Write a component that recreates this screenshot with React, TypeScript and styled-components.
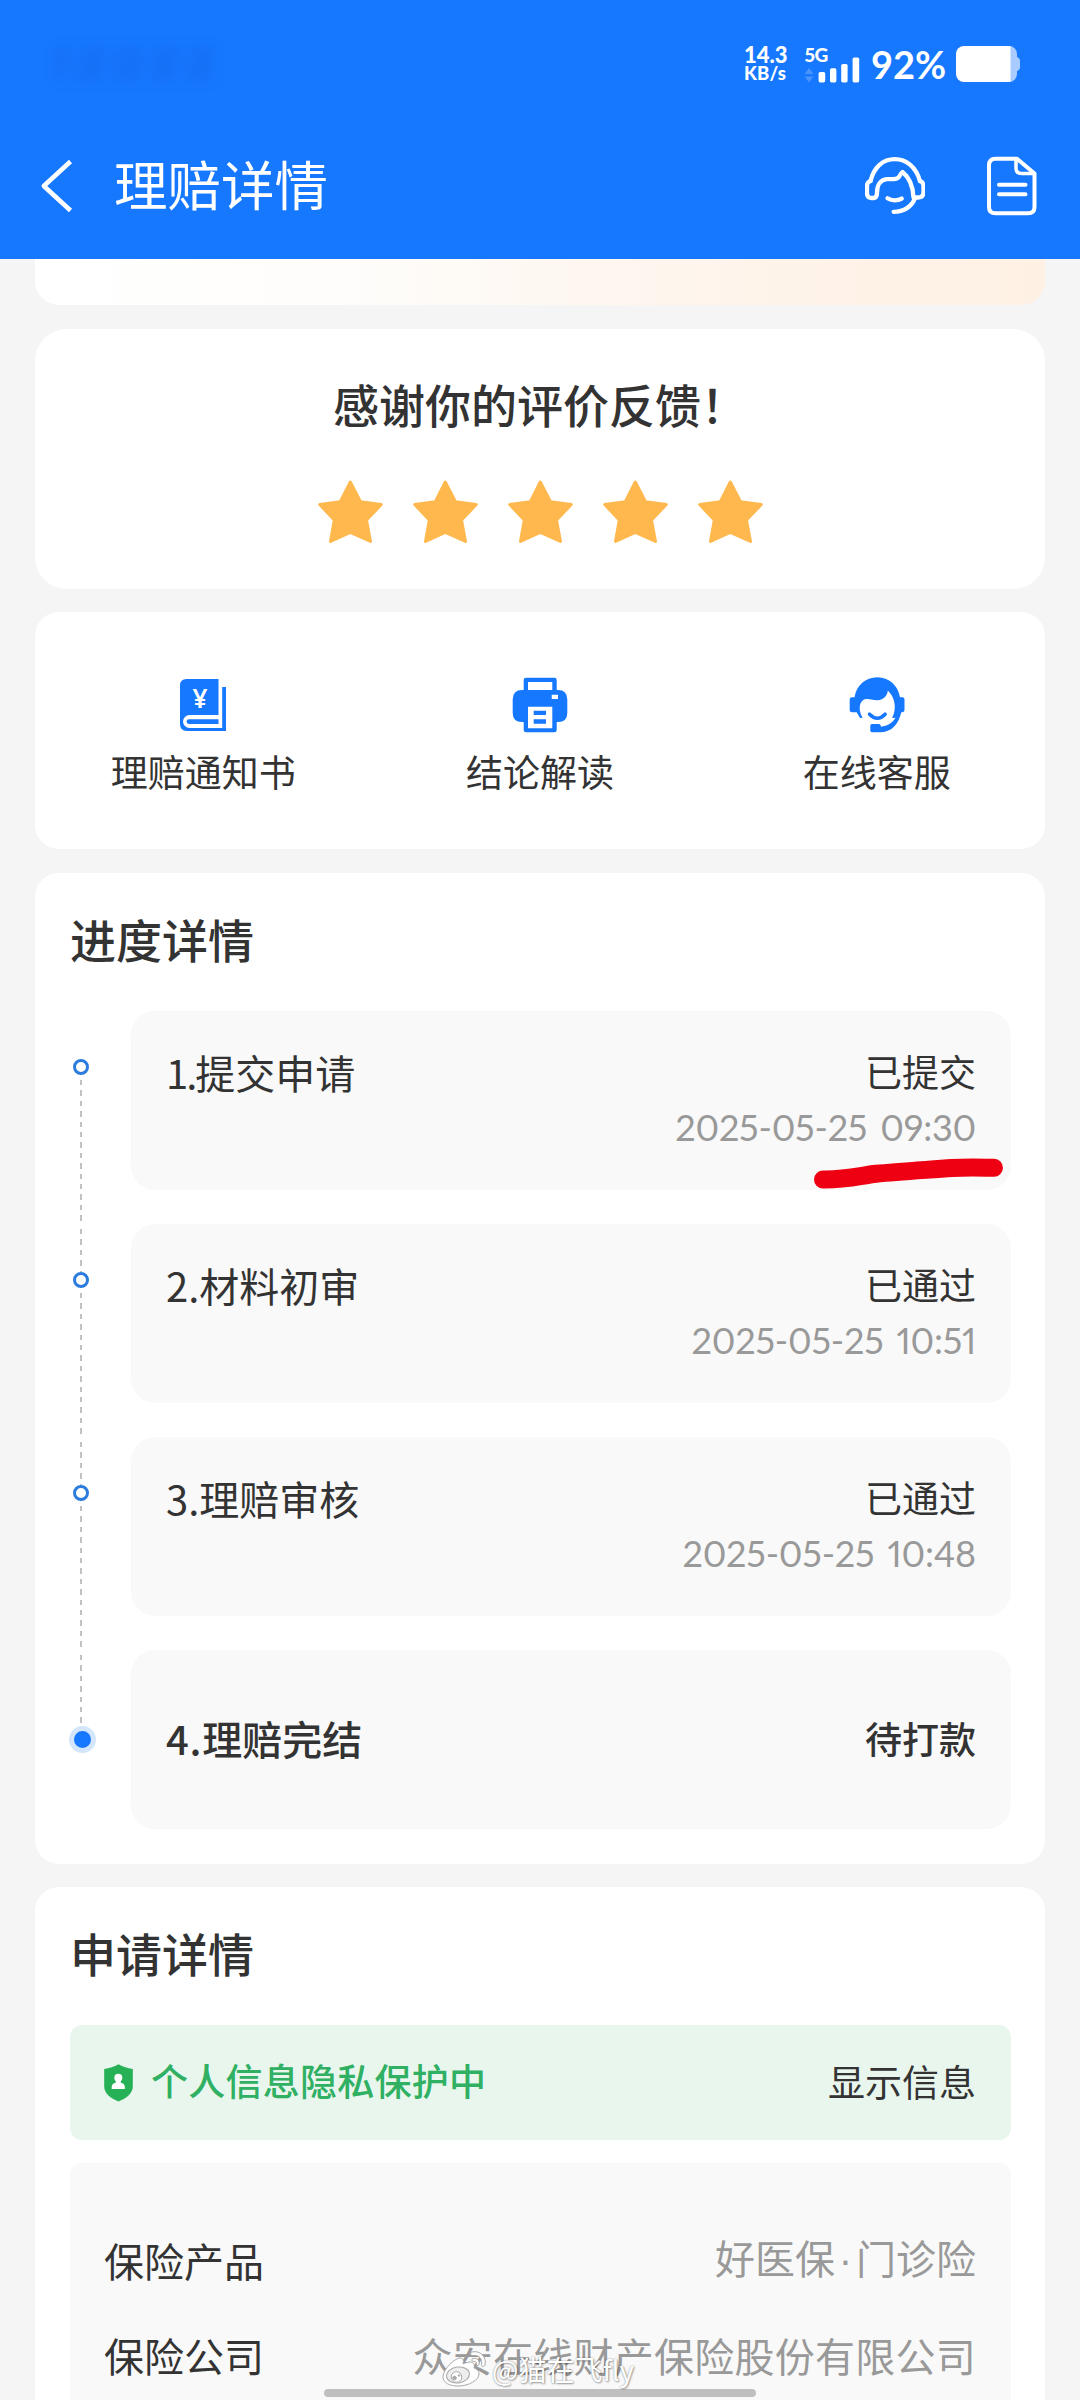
import React from "react";
import styled, { createGlobalStyle } from "styled-components";

const BLUE = "#1677ff";

const GlobalStyle = createGlobalStyle`
  * { box-sizing: border-box; }
  html, body { margin: 0; padding: 0; background: #f5f5f5; }
  body { overflow: hidden; }
`;

const Screen = styled.div`
  position: relative;
  width: 1080px;
  height: 2400px;
  overflow: hidden;
  background: #f5f5f5;
  color: #333;
  font-family: "Noto Sans CJK SC", "Liberation Sans", sans-serif;
`;

const Header = styled.header`
  height: 259px;
  background: ${BLUE};
  color: #fff;
`;

const StatusBar = styled.div`
  height: 128px;
  padding: 0 60px 0 56px;
  display: flex;
  align-items: center;
  font-family: Lato, "Noto Sans", sans-serif;
  font-weight: 700;
`;

const Carrier = styled.div`
  width: 158px;
  height: 34px;
  margin-right: auto;
  filter: blur(6px);
  background: repeating-linear-gradient(100deg, rgba(20, 92, 215, 0.24) 0 9px, rgba(20, 92, 215, 0.06) 12px 25px, rgba(20, 92, 215, 0.18) 30px 36px);
`;

const NetSpeed = styled.div`
  width: 46px;
  margin-right: 14px;
  font-weight: 900;
  white-space: nowrap;
`;

const SpeedLine = styled.div<{ $size: number; $spacing: number }>`
  font-size: ${(p) => p.$size}px;
  line-height: 19.5px;
  letter-spacing: ${(p) => p.$spacing}px;
`;

const Percent = styled.div`
  width: 76px;
  margin: 0 9px 0 11px;
  font-size: 38px;
  line-height: 44px;
  letter-spacing: -0.1px;
  white-space: nowrap;
`;

const NavBar = styled.div`
  height: 131px;
  padding: 0 42px 16px 40px;
  display: flex;
  align-items: center;
`;

const NavTitle = styled.h1`
  margin: -6px auto 0 40px;
  font-size: 53.5px;
  line-height: 72px;
  font-weight: 400;
`;

const NavIcons = styled.div`
  display: flex;
  gap: 61px;
`;

const Content = styled.main`
  padding: 0 35px;
  display: flex;
  flex-direction: column;
  gap: 23.5px;
`;

const Card = styled.section<{ $h: number; $r?: number }>`
  flex: none;
  height: ${(p) => p.$h}px;
  background: #fff;
  border-radius: ${(p) => p.$r ?? 24}px;
`;

const Banner = styled.div`
  flex: none;
  height: 46px;
  border-radius: 0 0 24px 24px;
  background: linear-gradient(90deg, #fff 0%, #fefdfb 30%, #fef8f2 50%, #fef3e9 75%, #fef1e4 100%);
`;

const RatingCard = styled(Card)`
  display: flex;
  flex-direction: column;
  align-items: center;
  padding-top: 42px;
`;

const RatingTitle = styled.div`
  font-size: 46px;
  line-height: 64px;
  font-weight: 500;
`;

const Stars = styled.div`
  display: flex;
  gap: 30px;
  margin-top: 45px;
`;

const ActionsCard = styled(Card)`
  display: grid;
  grid-template-columns: repeat(3, 1fr);
  padding-top: 65px;
`;

const Action = styled.div`
  display: flex;
  flex-direction: column;
  align-items: center;
  gap: 12px;
`;

const ActionLabel = styled.span`
  font-size: 37px;
  line-height: 52px;
`;

const SectionCard = styled(Card)`
  padding: 33px 34px 0 35px;
`;

const SectionTitle = styled.h2`
  margin: 0 0 41px;
  font-size: 46px;
  line-height: 64px;
  font-weight: 500;
`;

const Step = styled.div`
  display: flex;
  height: 213px;
`;

const Rail = styled.div`
  width: 61px;
  flex: none;
  display: flex;
  flex-direction: column;
`;

const Dash = styled.div<{ $h?: number; $on: boolean }>`
  width: 2px;
  margin-left: 10px;
  ${(p) => (p.$h ? `height: ${p.$h}px;` : "flex: 1;")}
  background: ${(p) => (p.$on ? "repeating-linear-gradient(180deg, transparent 0 5px, #c2c2c2 5px 10.4px)" : "none")};
`;

const Dot = styled.div`
  width: 16px;
  height: 16px;
  margin-left: 3px;
  border: 3px solid #2b7cdd;
  border-radius: 50%;
  background: #fff;
`;

const CurrentDot = styled.div`
  width: 27px;
  height: 27px;
  margin-left: -1px;
  border: 5.5px solid #d3e6fb;
  border-radius: 50%;
  background: ${BLUE};
`;

const StepBody = styled.div<{ $active?: boolean }>`
  flex: 1;
  height: 179px;
  padding: ${(p) => (p.$active ? "0 35px 2px" : "33px 35px 0")};
  display: flex;
  justify-content: space-between;
  align-items: ${(p) => (p.$active ? "center" : "flex-start")};
  border-radius: 24px;
  background: #f9f9f9;
  font-weight: ${(p) => (p.$active ? 500 : 400)};
`;

const StepName = styled.div`
  font-size: 40px;
  line-height: 57px;
`;

const StepNumber = styled.span<{ $spacing: number }>`
  letter-spacing: ${(p) => p.$spacing}px;
`;

const StepResult = styled.div`
  display: flex;
  flex-direction: column;
  align-items: flex-end;
`;

const StepStatus = styled.div`
  font-size: 37px;
  line-height: 55px;
`;

const StepTime = styled.time`
  margin-top: 3px;
  font-family: Lato, "Noto Sans", sans-serif;
  font-variant-numeric: proportional-nums;
  font-size: 36px;
  line-height: 50px;
  letter-spacing: -0.2px;
  word-spacing: 4px;
  color: #999;
  white-space: nowrap;
`;

const Privacy = styled.div`
  height: 115px;
  padding: 0 35px 0 34px;
  display: flex;
  align-items: center;
  border-radius: 12px;
  background: #e9f6ee;
  font-size: 37px;
  line-height: 54px;
`;

const PrivacyText = styled.span`
  margin: -5px auto 0 18px;
  font-weight: 500;
  letter-spacing: 0.25px;
  color: #2fb062;
`;

const PrivacyAction = styled.span`
  margin-top: -4px;
`;

const Details = styled.div`
  height: 300px;
  margin-top: 23px;
  padding: 49px 35px 0 34px;
  border-radius: 12px;
  background: #f9f9f9;
`;

const DetailRow = styled.div`
  height: 95px;
  display: flex;
  justify-content: space-between;
  align-items: center;
  font-size: 40px;
  line-height: 60px;
`;

const DetailValue = styled.span<{ $lift?: number; $spacing?: number }>`
  color: #999;
  margin-top: ${(p) => -(p.$lift ?? 0)}px;
  letter-spacing: ${(p) => p.$spacing ?? 0}px;
`;

const MiddleDot = styled.span`
  display: inline-block;
  width: 21px;
  text-align: center;
  line-height: 40px;
  font-family: "Liberation Sans", sans-serif;
`;

const Marker = styled.svg`
  position: absolute;
  left: 804px;
  top: 1150px;
`;

const HomeBar = styled.div`
  position: absolute;
  left: 324px;
  top: 2389px;
  width: 432px;
  height: 8px;
  border-radius: 4px;
  background: #bfbfbf;
`;

const Watermark = styled.div`
  position: absolute;
  left: 441px;
  top: 2348px;
  display: flex;
  align-items: center;
  gap: 4px;
  font-size: 28px;
  line-height: 42px;
  color: #fff;
  white-space: nowrap;
  text-shadow: 0 0 2px rgba(0, 0, 0, 0.4), 1px 1px 2px rgba(0, 0, 0, 0.3);
`;

const StatusIcon = styled.svg`
  flex: none;
`;

const SignalIcon = () => (
  <StatusIcon width="56" height="40" viewBox="0 0 56 40">
    <text x="0.3" y="17.5" fontFamily="Lato" fontWeight="900" fontSize="19" fill="#fff" textLength="24">5G</text>
    <path d="M5 24l4.5 6H.5zM5 38.5l4.5-6H.5z" fill="#4a94ff" />
    <g fill="#fff">
      <rect x="14.6" y="28" width="6.6" height="10.4" rx="1.6" />
      <rect x="26" y="24.3" width="6.4" height="14.1" rx="1.6" />
      <rect x="37.2" y="20" width="6.4" height="18.4" rx="1.6" />
      <rect x="48.6" y="13.6" width="6.6" height="24.8" rx="1.6" />
    </g>
  </StatusIcon>
);

const BatteryIcon = () => (
  <StatusIcon width="64" height="36" viewBox="0 0 64 36">
    <path d="M50 0h3a8 8 0 0 1 8 8v3q3 1 3 4v6q0 3-3 4v3a8 8 0 0 1-8 8h-3z" fill="#a8ccff" />
    <path d="M8 0h46.5v36H8a8 8 0 0 1-8-8V8a8 8 0 0 1 8-8z" fill="#fff" />
  </StatusIcon>
);

const BackIcon = () => (
  <svg width="34" height="56" viewBox="0 0 34 56" fill="none" stroke="#fff" strokeWidth="4.6">
    <path d="M30.5 3.5L3.8 28l26.700 24.500" strokeLinejoin="round" />
  </svg>
);

const ServiceIcon = () => (
  <svg width="60" height="60" viewBox="0 0 60 60" fill="none" stroke="#fff" strokeWidth="4.300" strokeLinecap="round" strokeLinejoin="round">
    <path d="M5.500 25C9 11 18 3.200 29.800 3.200S51 11 55 25" />
    <path d="M5.500 25Q2 26 2 30v7q0 5 4.500 5h2q3.500 0 3.500-5C12 29 15.500 23.800 22 23.200c7 0 10 .5 12.300-2.700.8-2 1.500-3.500 3.200-4.500C44.500 21.500 48 30 48.500 41.500H53q5.500 0 5.500-5.500v-6q0-4-3.500-5" />
    <path d="M50 42C47 50.500 39 55.800 28.600 55.800" />
    <path d="M22.500 42.300q3 2 7.200 2t7-1.700" />
  </svg>
);

const DocumentIcon = () => (
  <svg width="52" height="60" viewBox="0 0 52 60" fill="none" stroke="#fff" strokeWidth="4" strokeLinecap="round" strokeLinejoin="round">
    <path d="M31 2.700H9.500q-6.500 0-6.500 6.500V51q0 6.300 6.500 6.300H42q6.500 0 6.500-6.300V17.500z" />
    <path d="M30 3.500V12q0 5.500 5.500 5.500H48" strokeWidth="3.500" />
    <path d="M13 28.700h26.500M13 38.300h26.500" />
  </svg>
);

const StarIcon = () => (
  <svg width="65" height="64" viewBox="0 0 65 64">
    <path
      d="M32.300 2L42.500 21.800L63.300 24.500L48.500 40L52.500 61.500L32.300 52.500L12.500 61.500L16.300 40L1.700 24.500L22.300 21.800Z"
      fill="#ffb84d"
      stroke="#ffb84d"
      strokeWidth="3"
      strokeLinejoin="round"
    />
  </svg>
);

const BookIcon = () => (
  <svg width="46" height="56" viewBox="0 -2 46 56">
    <path d="M6.500 0h32v8H46v44H7q-7 0-7-7V6.500Q0 0 6.500 0z" fill={BLUE} />
    <path d="M38.500 8h3.700v41H9.500a6.500 6.500 0 0 1 0-13h29z" fill="#fff" />
    <path d="M9 40.200h29.500v4.800H9a2.400 2.400 0 0 1 0-4.800z" fill={BLUE} />
    <text x="20" y="28.5" textAnchor="middle" fontFamily="Noto Sans" fontWeight="600" fontSize="27" textLength="15" lengthAdjust="spacingAndGlyphs" fill="#fff">¥</text>
  </svg>
);

const PrinterIcon = () => (
  <svg width="56" height="56" viewBox="0 0 56 56">
    <path d="M14 .7h28.500q2.200 0 2.200 2.200V13H46q9.300 0 9.300 9.500V36q0 9-9.300 9h-1.300v8q0 2.300-2.200 2.300H14q-2.300 0-2.300-2.300v-8H10Q.7 45 .7 36V22.500Q.7 13 10 13h1.700V2.900Q11.700.7 14 .7z" fill={BLUE} />
    <path d="M16 5h24.300v8H16zM16 29.700h24.300v21.600H16zM39.700 17.700H46V22h-6.300z" fill="#fff" />
    <path d="M21.700 33.700H34V38H21.700zM21.700 42.300H34v4.400H21.700z" fill={BLUE} />
  </svg>
);

const AgentIcon = () => (
  <svg width="56" height="56" viewBox="0 0 56 56">
    <path
      d="M28.300 .3C40 .3 49 8.500 51 20.200h2.500q2 0 2 2V33q0 2-2 2.300h-1.200C49.500 47.500 42.500 55.300 31 55.300h-8q-1.700 0-1.700-1.700v-4.800q0-1.700 1.700-1.700h7q1.800 0 2 2.600C38.500 48.800 43 46.500 46.500 40.800L43 41C45.500 36.500 46 32 45.700 28 45.300 22 42.500 17 38.800 13.500 38.500 18 35 23 28.500 23.200 22 23.300 18 20.500 14 23.200 9.500 26.500 9.800 35 13.700 40.700L11 41 7.700 35.300H3q-2.300 0-2.300-2.300V22.200q0-2 2.300-2h2.500C7.500 8.500 16.500 .3 28.300 .3z"
      fill={BLUE}
    />
    <path d="M20.500 37.200q8 8 15.600 0" fill="none" stroke={BLUE} strokeWidth="3.600" strokeLinecap="round" />
  </svg>
);

const ShieldIcon = () => (
  <svg width="29" height="38" viewBox="0 0 29 38">
    <path d="M14.500 .3C19 3 23.500 4.300 28.800 5v17.500C28.800 30 21.500 34.500 14.500 37.500 7.500 34.500 .2 30 .2 22.500V5C5.500 4.300 10 3 14.500 .3z" fill="#27b157" />
    <circle cx="14.300" cy="13.800" r="4" fill="#fff" />
    <path d="M11.800 16h5v2.800q4 .8 4 4.200v2H7.700v-2q0-3.400 4.100-4.200z" fill="#fff" />
  </svg>
);

const WeiboIcon = () => (
  <svg width="47" height="40" viewBox="0 0 47 40" fill="#fff" stroke="#aaa" strokeWidth="1">
    <path d="M19 9c-5 0-17 11-17 19 0 6 7 9 15 9 11 0 21-6 21-12 0-4-3-5-5-6 1-3 0-6-4-6-2 0-5 1-7 2 1-4 0-6-3-6z" />
    <ellipse cx="17" cy="26" rx="11.500" ry="8" fill="#eee" transform="rotate(-8 17 26)" />
    <circle cx="15.500" cy="28" r="5.300" />
    <circle cx="13.500" cy="29" r="1.800" fill="#aaa" />
    <circle cx="18" cy="26.500" r=".8" fill="#aaa" />
    <path d="M31 3c8-2 15 5 13 13-.5 2-4 2-3.500-.5C42 9.500 37 5.500 32 6.500c-2.500.5-3-2.700-1-3.500z" />
    <path d="M32 9.500c4-1 7 2 6 6-.5 1.800-3 1.200-2.700-.5.400-2-.8-3-2.800-2.600-2 .3-2.300-2.300-.5-2.900z" />
  </svg>
);

const ACTIONS = [
  { label: "理赔通知书", icon: <BookIcon /> },
  { label: "结论解读", icon: <PrinterIcon /> },
  { label: "在线客服", icon: <AgentIcon /> },
];

const STEPS = [
  { no: "1.", spacing: -2, name: "提交申请", status: "已提交", time: "2025-05-25 09:30" },
  { no: "2.", spacing: 0, name: "材料初审", status: "已通过", time: "2025-05-25 10:51" },
  { no: "3.", spacing: 0, name: "理赔审核", status: "已通过", time: "2025-05-25 10:48" },
  { no: "4.", spacing: 0.8, name: "理赔完结", status: "待打款" },
];

export default function App() {
  return (
    <Screen>
      <GlobalStyle />
      <Header>
        <StatusBar>
          <Carrier />
          <NetSpeed>
            <SpeedLine $size={22} $spacing={0}>14.3</SpeedLine>
            <SpeedLine $size={18.5} $spacing={0.2}>KB/s</SpeedLine>
          </NetSpeed>
          <SignalIcon />
          <Percent>92%</Percent>
          <BatteryIcon />
        </StatusBar>
        <NavBar>
          <BackIcon />
          <NavTitle>理赔详情</NavTitle>
          <NavIcons>
            <ServiceIcon />
            <DocumentIcon />
          </NavIcons>
        </NavBar>
      </Header>
      <Content>
        <Banner />
        <RatingCard $h={260} $r={32}>
          <RatingTitle>感谢你的评价反馈！</RatingTitle>
          <Stars>
            {[1, 2, 3, 4, 5].map((n) => (
              <StarIcon key={n} />
            ))}
          </Stars>
        </RatingCard>
        <ActionsCard $h={237}>
          {ACTIONS.map((a) => (
            <Action key={a.label}>
              {a.icon}
              <ActionLabel>{a.label}</ActionLabel>
            </Action>
          ))}
        </ActionsCard>
        <SectionCard $h={991}>
          <SectionTitle>进度详情</SectionTitle>
          {STEPS.map((s, i) => (
            <Step key={s.no}>
              <Rail>
                <Dash $h={s.time ? 48 : 76} $on={i > 0} />
                {s.time ? <Dot /> : <CurrentDot />}
                <Dash $on={!!s.time} />
              </Rail>
              <StepBody $active={!s.time}>
                <StepName>
                  <StepNumber $spacing={s.spacing}>{s.no}</StepNumber>
                  {s.name}
                </StepName>
                <StepResult>
                  <StepStatus>{s.status}</StepStatus>
                  {s.time && <StepTime>{s.time}</StepTime>}
                </StepResult>
              </StepBody>
            </Step>
          ))}
        </SectionCard>
        <SectionCard $h={560}>
          <SectionTitle>申请详情</SectionTitle>
          <Privacy>
            <ShieldIcon />
            <PrivacyText>个人信息隐私保护中</PrivacyText>
            <PrivacyAction>显示信息</PrivacyAction>
          </Privacy>
          <Details>
            <DetailRow>
              <span>保险产品</span>
              <DetailValue $lift={5}>
                好医保<MiddleDot>·</MiddleDot>门诊险
              </DetailValue>
            </DetailRow>
            <DetailRow>
              <span>保险公司</span>
              <DetailValue $spacing={0.25}>众安在线财产保险股份有限公司</DetailValue>
            </DetailRow>
          </Details>
        </SectionCard>
      </Content>
      <Marker width="210" height="50" viewBox="0 0 210 50" fill="none">
        <path d="M19 29.500C40 30 55 26 72 23.800C95 21.500 125 19.800 148 18C165 17 175 17.500 190 17.800" stroke="#ee0012" strokeWidth="18" strokeLinecap="round" strokeLinejoin="round" />
      </Marker>
      <HomeBar />
      <Watermark>
        <WeiboIcon />
        <span>@猫在飞fly</span>
      </Watermark>
    </Screen>
  );
}
